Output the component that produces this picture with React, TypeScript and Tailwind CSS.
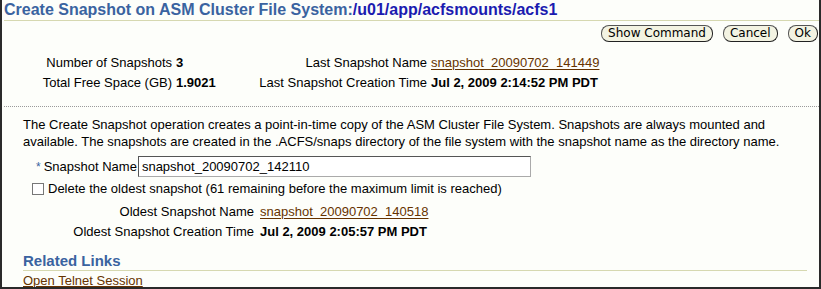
import React from 'react';

const font = { fontFamily: '"Liberation Sans", Arial, sans-serif' };

function Btn({ label }: { label: string }) {
  return (
    <button
      className="h-[17px] px-[6px] rounded-[8px] border border-[#555] border-r-[#222] border-b-[#222] bg-[#f3f3e2] text-[12px] leading-[15px] text-black"
      style={{ fontFamily: '"DejaVu Sans", Verdana, sans-serif' }}
    >
      {label}
    </button>
  );
}

function Link({ children }: { children: React.ReactNode }) {
  return <a className="text-[#663300] underline underline-offset-2">{children}</a>;
}

export default function App() {
  return (
    <div
      className="w-[821px] h-[289px] overflow-hidden bg-[#fdfefa] border-l-2 border-r-2 border-b-2 border-[#2a2a2a] text-[13px] text-black"
      style={font}
    >
      <div className="ml-[2px] h-[21px] border-b border-[#d6d8b0] flex items-start">
        <h1 className="text-[16px] font-bold leading-[20px] text-[#3a63a0]">
          Create Snapshot on ASM Cluster File System:<span className="text-[#1b1bb0]">/u01/app/acfsmounts/acfs1</span>
        </h1>
      </div>

      <div className="flex justify-end gap-[10px] mt-[4px] pr-[1px]">
        <Btn label="Show Command" />
        <Btn label="Cancel" />
        <Btn label="Ok" />
      </div>

      <div className="mt-[11px] grid grid-cols-[170px_251px_auto] gap-x-[4px] leading-[20px]">
        <div className="text-right">Number of Snapshots</div>
        <div className="flex justify-between">
          <span className="font-bold">3</span>
          <span>Last Snapshot Name</span>
        </div>
        <div>
          <Link>snapshot_20090702_141449</Link>
        </div>
        <div className="text-right">Total Free Space (GB)</div>
        <div className="flex justify-between">
          <span className="font-bold">1.9021</span>
          <span>Last Snapshot Creation Time</span>
        </div>
        <div className="font-bold">Jul 2, 2009 2:14:52 PM PDT</div>
      </div>

      <div className="mt-[13px] ml-[2px] border-t border-dotted border-[#9a9a9a]" />

      <div className="pl-[21px] pr-3">
        <p className="mt-[9px] leading-[17px]">
          The Create Snapshot operation creates a point-in-time copy of the ASM Cluster File System. Snapshots are always mounted and
          available. The snapshots are created in the .ACFS/snaps directory of the file system with the snapshot name as the directory name.
        </p>

        <div className="mt-[6px] flex items-center h-[21px]">
          <span className="ml-[13px] mr-[3px] text-[#3a63a0] text-[12px]">*</span>
          <span>Snapshot Name</span>
          <input
            className="ml-[1px] w-[393px] h-[21px] px-[3px] border border-[#aaa] border-t-[#555] border-l-[#555] bg-white text-[13px] outline-none"
            style={font}
            defaultValue="snapshot_20090702_142110"
          />
        </div>

        <label className="mt-[4px] flex items-center leading-[15px]">
          <span className="ml-[9px] mr-[4px] w-[12px] h-[12px] border border-[#777] bg-white inline-block" />
          <span>Delete the oldest snapshot (61 remaining before the maximum limit is reached)</span>
        </label>

        <div className="mt-[6px] grid grid-cols-[231px_auto] gap-x-[6px] leading-[20px]">
          <div className="text-right">Oldest Snapshot Name</div>
          <div>
            <Link>snapshot_20090702_140518</Link>
          </div>
          <div className="text-right">Oldest Snapshot Creation Time</div>
          <div className="font-bold">Jul 2, 2009 2:05:57 PM PDT</div>
        </div>

        <div className="mt-[10px] pb-[1px] border-b border-[#d6d8b0] text-[15px] font-bold leading-[17px] text-[#3a63a0]">
          Related Links
        </div>
        <div className="mt-[2px] leading-[15px]">
          <a className="text-[#663300] underline underline-offset-1">Open Telnet Session</a>
        </div>
      </div>
    </div>
  );
}
